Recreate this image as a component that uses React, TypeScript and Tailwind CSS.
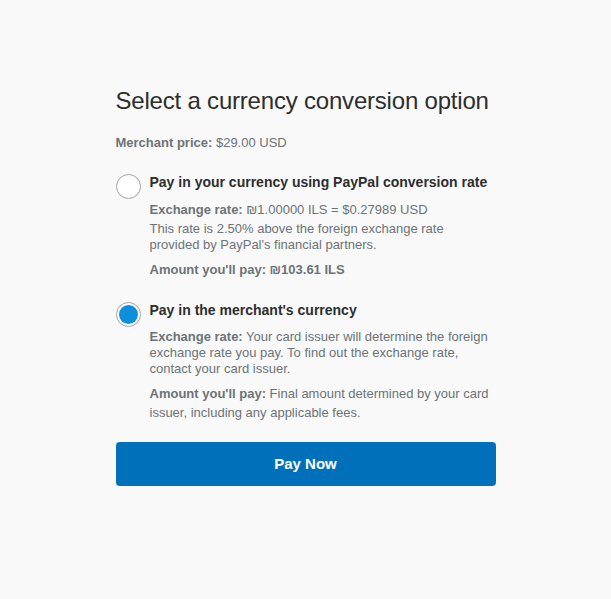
import React from "react";

export default function App() {
  return (
    <div
      className="min-h-[599px] w-full bg-[#f9f9f9] flex justify-center"
      style={{ fontFamily: '"Liberation Sans", Arial, sans-serif' }}
    >
      <div className="w-[380px] pt-[86px]">
        <h1 className="text-[24px] leading-[30px] font-light text-[#2c2e2f] tracking-[-0.2px]">
          Select a currency conversion option
        </h1>
        <p className="mt-[19px] text-[13px] leading-[16px] text-[#6c7378]">
          <span className="font-bold">Merchant price:</span> $29.00 USD
        </p>

        <div className="mt-[22px] flex">
          <div className="w-[34px] shrink-0 pt-[1px]">
            <div className="w-[25px] h-[25px] rounded-full border border-[#9da3a6] bg-white" />
          </div>
          <div className="flex-1">
            <p className="text-[14px] leading-[18px] font-bold text-[#2c2e2f]">
              Pay in your currency using PayPal conversion rate
            </p>
            <p className="mt-[10px] text-[13px] leading-[17px] text-[#6c7378]">
              <span className="font-bold">Exchange rate:</span> ₪1.00000 ILS = $0.27989 USD
            </p>
            <p className="mt-[3px] text-[13px] leading-[16px] text-[#6c7378]">
              This rate is 2.50% above the foreign exchange rate
              <br />
              provided by PayPal's financial partners.
            </p>
            <p className="mt-[8px] text-[13px] leading-[17px] text-[#6c7378] font-bold">
              Amount you'll pay: ₪103.61 ILS
            </p>
          </div>
        </div>

        <div className="mt-[23px] flex">
          <div className="w-[34px] shrink-0 pt-[1px]">
            <div className="w-[25px] h-[25px] rounded-full border border-[#9da3a6] bg-white flex items-center justify-center">
              <div className="w-[19px] h-[19px] rounded-full bg-[#0e8fdd]" />
            </div>
          </div>
          <div className="flex-1">
            <p className="text-[14px] leading-[18px] font-bold text-[#2c2e2f]">
              Pay in the merchant's currency
            </p>
            <p className="mt-[10px] text-[13px] leading-[16px] text-[#6c7378]">
              <span className="font-bold">Exchange rate:</span> Your card issuer will determine the foreign
              <br />
              exchange rate you pay. To find out the exchange rate,
              <br />
              contact your card issuer.
            </p>
            <p className="mt-[7px] text-[13px] leading-[19px] text-[#6c7378]">
              <span className="font-bold">Amount you'll pay:</span> Final amount determined by your card
              <br />
              issuer, including any applicable fees.
            </p>
          </div>
        </div>

        <button className="mt-[20px] w-full h-[44px] rounded-[4px] bg-[#0070ba] text-white text-[15px] font-bold">
          Pay Now
        </button>
      </div>
    </div>
  );
}
